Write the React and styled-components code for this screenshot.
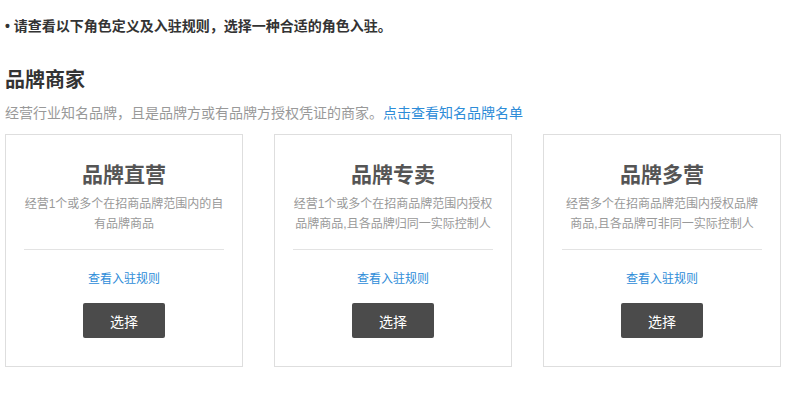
import styled, { createGlobalStyle } from 'styled-components';

const GlobalStyle = createGlobalStyle`
  html, body {
    margin: 0;
    padding: 0;
    background: #fff;
  }
  body {
    font-family: "Liberation Sans", "Noto Sans CJK SC", sans-serif;
    color: #333;
  }
`;

const Page = styled.div`
  padding: 16px 5px 0 5px;
  width: 776px;
`;

const Notice = styled.p`
  margin: 0;
  font-size: 14px;
  line-height: 20px;
  font-weight: bold;
  color: #333;
`;

const Heading = styled.h2`
  margin: 30px 0 0 0;
  font-size: 20px;
  line-height: 28px;
  font-weight: bold;
  color: #333;
`;

const Intro = styled.p`
  margin: 9px 0 0 0;
  font-size: 14px;
  line-height: 20px;
  color: #999;
`;

const Link = styled.a`
  color: #2d8cd8;
  text-decoration: none;
  cursor: pointer;
`;

const CardRow = styled.div`
  margin-top: 11px;
  display: grid;
  grid-template-columns: repeat(3, 238px);
  gap: 31px;
`;

const Card = styled.div`
  box-sizing: border-box;
  border: 1px solid #dedede;
  padding: 25px 18px 28px 18px;
  display: flex;
  flex-direction: column;
  align-items: center;
  text-align: center;
`;

const CardTitle = styled.h3`
  margin: 0 0 4px 0;
  font-size: 21px;
  line-height: 30px;
  font-weight: bold;
  color: #555;
`;

const CardDesc = styled.p`
  margin: 0;
  font-size: 12px;
  line-height: 20px;
  color: #999;
`;

const Divider = styled.div`
  align-self: stretch;
  margin-top: 15px;
  border-top: 1px solid #e3e3e3;
`;

const RuleLink = styled(Link)`
  margin-top: 19px;
  font-size: 12px;
  line-height: 20px;
`;

const SelectButton = styled.button`
  margin-top: 14px;
  width: 82px;
  height: 35px;
  border: none;
  border-radius: 2px;
  background: #4b4b4b;
  color: #fff;
  font-family: inherit;
  font-size: 14px;
  cursor: pointer;
`;

const roles = [
  { title: '品牌直营', desc: '经营1个或多个在招商品牌范围内的自有品牌商品' },
  { title: '品牌专卖', desc: '经营1个或多个在招商品牌范围内授权品牌商品,且各品牌归同一实际控制人' },
  { title: '品牌多营', desc: '经营多个在招商品牌范围内授权品牌商品,且各品牌可非同一实际控制人' },
];

export default function App() {
  return (
    <Page>
      <GlobalStyle />
      <Notice>• 请查看以下角色定义及入驻规则，选择一种合适的角色入驻。</Notice>
      <Heading>品牌商家</Heading>
      <Intro>
        经营行业知名品牌，且是品牌方或有品牌方授权凭证的商家。<Link>点击查看知名品牌名单</Link>
      </Intro>
      <CardRow>
        {roles.map((r) => (
          <Card key={r.title}>
            <CardTitle>{r.title}</CardTitle>
            <CardDesc>{r.desc}</CardDesc>
            <Divider />
            <RuleLink>查看入驻规则</RuleLink>
            <SelectButton>选择</SelectButton>
          </Card>
        ))}
      </CardRow>
    </Page>
  );
}
